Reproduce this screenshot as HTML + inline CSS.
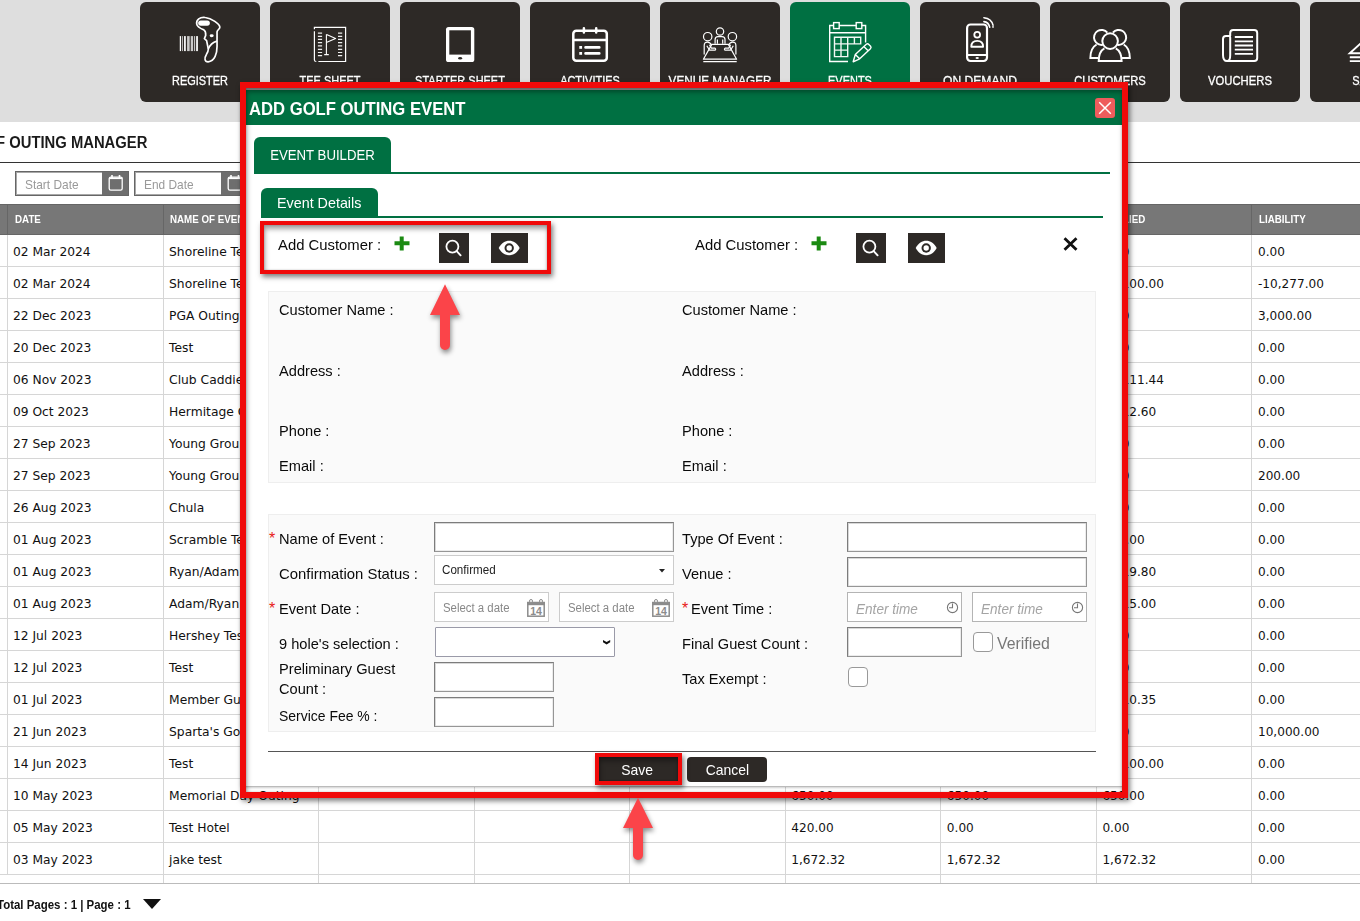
<!DOCTYPE html>
<html lang="en"><head><meta charset="utf-8"><title>Golf Outing Manager</title>
<style>
*{box-sizing:border-box;margin:0;padding:0}
html,body{width:1360px;height:921px;overflow:hidden;background:#fff}
body{position:relative;font-family:"Liberation Sans",sans-serif;color:#111;font-size:15px}
.abs{position:absolute}
/* nav */
.navband{position:absolute;left:0;top:0;width:1360px;height:122px;background:#dedede}
.tile{position:absolute;top:2px;width:120px;height:100px;background:#2d2926;border-radius:6px;color:#fff}
.tile.on{background:#007042}
.tile svg{position:absolute;left:0;top:0;width:120px;height:100px;overflow:visible}
.tile .lb{-webkit-text-stroke:.3px #fff;position:absolute;left:-20px;width:160px;top:71px;height:16px;line-height:16px;text-align:center;font-size:12.4px;white-space:nowrap;transform:scaleX(.885);transform-origin:50% 50%}
/* page */
.ptitle{position:absolute;left:-36px;top:133px;font-weight:bold;font-size:16px;line-height:20px;white-space:nowrap;color:#1a1a1a;transform:scaleX(.925);transform-origin:0 50%}
.phr{position:absolute;left:0;top:162px;width:1360px;height:1px;background:#333}
.dbox{position:absolute;top:171px;width:114px;height:25px;border:1px solid #666;box-shadow:inset 0 0 0 1px #a8a8a8;background:#fff}
.dbox .ph{position:absolute;left:9px;top:1px;line-height:24px;font-size:12.8px;color:#999;white-space:nowrap;transform:scaleX(.93);transform-origin:0 50%}
.dbox .cal{position:absolute;right:0;top:0;width:26px;height:23px;background:#6e6e6e}
/* grid */
.grid{position:absolute;left:-148px;top:204px;width:1560px;height:680px;overflow:hidden;border-bottom:1px solid #bbb;font-family:"DejaVu Sans","Liberation Sans",sans-serif}
.ghead{position:relative;height:31px;background:#777;border-top:1px solid #666;border-bottom:1px solid #666}
.grow{position:relative;height:32px;border-bottom:1px solid #d6d6d6;background:#fff}
.grow.last{height:10px;border-bottom:none}
.gc{position:absolute;top:0;bottom:0;border-right:1px solid #d6d6d6;font-size:12.3px;line-height:35px;white-space:nowrap;overflow:hidden;color:#111;padding-left:5.500px}
.grow .c0{padding-left:5px}
.c2,.c3,.c4,.c5,.c6,.c7,.c8{font-size:12.1px}
.c0{font-size:12.25px}
.ghead .c1 span{transform:scaleX(.975)}
.ghead .gc{border-right:1px solid #666;color:#fff;font-weight:bold;font-size:10.5px;line-height:29px;font-family:"Liberation Sans",sans-serif;padding-left:6.5px}
.ghead .gc span{display:inline-block;transform:scaleX(.93);transform-origin:0 50%}
.pager{position:absolute;left:-3px;top:897px;font-weight:bold;font-size:12px;line-height:16px;white-space:nowrap;color:#111}
.pager span{display:inline-block;transform:scaleX(.955);transform-origin:0 50%}
.pager i{position:absolute;left:146px;top:2px;width:0;height:0;border-left:9px solid transparent;border-right:9px solid transparent;border-top:10px solid #111}
.c0{left:156.00px;width:155.56px}
.c1{left:311.56px;width:155.56px}
.c2{left:467.12px;width:155.56px}
.c3{left:622.68px;width:155.56px}
.c4{left:778.24px;width:155.56px}
.c5{left:933.80px;width:155.56px}
.c6{left:1089.36px;width:155.56px}
.c7{left:1244.92px;width:155.56px}
.c8{left:1400.48px;width:155.56px}
.gpre{left:0;width:156px}
/* modal */
.modal{position:absolute;left:241px;top:88px;width:883px;height:699px;background:#fff;border-top:2px solid #aaa;border-bottom:1px solid #bbb;box-shadow:0 0 3px rgba(0,0,0,.35)}
.mhead{position:absolute;left:0;top:0;width:100%;height:35px;background:#007042}
.mhead .tt{position:absolute;left:8px;top:7px;line-height:24px;font-size:18.5px;font-weight:bold;color:#fff;white-space:nowrap;transform:scaleX(.9);transform-origin:0 50%}
.mclose{position:absolute;left:1095px;top:98px;width:20px;height:20px;border-radius:3px;background:#ee5c5c}
.tab{position:absolute;background:#007042;color:#fff;border-radius:6px 6px 0 0;white-space:nowrap;text-align:center}
.tab span{display:inline-block;transform-origin:50% 50%}
.gline{position:absolute;height:2px;background:#007042}
.lbl{position:absolute;white-space:nowrap;font-size:15px;line-height:20px;color:#0a0a0a;transform-origin:0 50%;transform:scaleX(.975)}
.req{position:absolute;color:#e81818;font-size:16px;line-height:20px;margin-top:-.5px}
.panel{position:absolute;background:#fafafa;border:1px solid #eee}
.sqb{position:absolute;background:#2d2926;height:30px;top:233px}
.inp{position:absolute;background:#fff;border:1px solid;border-color:#7c7c7c #969696 #969696 #7c7c7c;box-shadow:inset 1px 1px 0 #d8d8d8, inset -1px -1px 0 #ececec;height:30px}
.kdd{position:absolute;background:#fff;border:1px solid #ccc;height:30px}
.kdd .tx{position:absolute;left:7px;top:0;line-height:29px;font-size:12.5px;color:#222;white-space:nowrap;transform:scaleX(.93);transform-origin:0 50%}
.kdd .ph{position:absolute;left:8px;top:0;line-height:30px;font-size:12px;color:#888;white-space:nowrap;transform:scaleX(.95);transform-origin:0 50%}
.kdd.tm{border-color:#b4b4b4}
.kdd .phi{position:absolute;left:7.500px;top:.700px;line-height:30px;font-size:14px;font-style:italic;color:#a4a4a4;white-space:nowrap;transform:scaleX(.97);transform-origin:0 50%}
.sel{position:absolute;background:#fff;border:1px solid #9a9aa8;border-radius:1px;height:29.400px}
.cb{position:absolute;width:20px;height:20px;border:1px solid #999;border-radius:4px;background:#fff}
.btn{position:absolute;background:#2d2926;color:#fff;text-align:center;font-size:15px;white-space:nowrap}
.btn span{display:inline-block;transform:scaleX(.93)}
.redbox{position:absolute;border:solid #f00a0a;box-shadow:2px 3px 5px rgba(0,0,0,.5), inset 0 0 2px rgba(0,0,0,.25), inset 1px 4px 5px rgba(0,0,0,.36)}
</style></head>
<body>

<div class="navband"></div>
<div class="tile" style="left:140px"><svg viewBox="0 0 120 100"><rect x="39.77" y="34.1" width="1.30" height="15" fill="#fff" opacity="1"/><rect x="42.05" y="34.1" width="0.78" height="15" fill="#fff" opacity="0.8"/><rect x="44.01" y="34.1" width="1.82" height="15" fill="#fff" opacity="0.95"/><rect x="47.07" y="34.1" width="2.61" height="15" fill="#fff" opacity="0.75"/><rect x="50.72" y="34.1" width="2.35" height="15" fill="#fff" opacity="0.75"/><rect x="53.97" y="34.1" width="1.17" height="15" fill="#fff" opacity="0.7"/><rect x="56.06" y="34.1" width="1.95" height="15" fill="#fff" opacity="0.9"/><path d="M56.71 22.01 C56.06 17.77 59.97 14.84 65.18 15.49 C71.69 16.14 79.51 22.01 79.84 25.07 C80.03 26.89 77.23 27.87 77.04 29.82 L77.04 44.48 C77.04 51.0 74.95 59.47 68.11 59.79 C64.53 59.79 64.2 56.21 66.16 52.95 C67.46 50.67 68.44 49.04 68.31 47.09 L66.61 38.62 L64.4 36.66 L65.7 33.41 C65.83 30.8 65.5 28.85 63.88 27.87 C60.62 26.57 57.04 24.94 56.71 22.01Z" stroke="#fff" fill="none" stroke-width="1.700" stroke-linejoin="round"/><path d="M68.31 47.09 C69.74 43.18 73.0 40.25 77.04 39.14" stroke="#fff" fill="none" stroke-width="1.600"/><rect x="58.14" y="18.42" width="11.73" height="5.21" rx="2.6" fill="#fff"/><ellipse cx="71.69" cy="33.73" rx="2" ry="1.400" fill="#fff"/></svg><div class="lb">REGISTER</div></div>
<div class="tile" style="left:270px"><svg viewBox="0 0 120 100"><path d="M44.400 27.300V25.300H75.600V59.500H48.400M44.400 29.300V58Q44.400 59.500 46.300 59.500" stroke="#fff" fill="none" stroke-width="1.200"/><path d="M47.9 31.1h4.2M68 31.1h4.2 M47.9 34.4h4.2M68 34.4h4.2 M47.9 37.4h4.2M68 37.4h4.2 M47.9 40.6h4.2M68 40.6h4.2 M47.9 43.8h4.2M68 43.8h4.2 M47.9 47.3h4.2M68 47.3h4.2 M47.9 50.5h4.2M68 50.5h4.2 M47.9 53.6h4.2M68 53.6h4.2" stroke="#fff" fill="none" stroke-width="1.200" opacity=".92"/><path d="M56.4 32.2V52.5M54.200 52.600h4.600M56.600 32.600L65.600 36.600L56.900 40.200" stroke="#fff" fill="none" stroke-width="1.1" stroke-linejoin="round"/></svg><div class="lb">TEE SHEET</div></div>
<div class="tile" style="left:400px"><svg viewBox="0 0 120 100"><rect x="46" y="24.9" width="28.3" height="35.2" rx="2.6" fill="#fff"/><rect x="49.3" y="28.3" width="21.600" height="24.300" fill="#2d2926"/><ellipse cx="60.1" cy="56.3" rx="2" ry="1.300" fill="#2d2926"/></svg><div class="lb">STARTER SHEET</div></div>
<div class="tile" style="left:530px"><svg viewBox="0 0 120 100"><rect x="43.3" y="28.8" width="33.5" height="30" rx="3" stroke="#fff" fill="none" stroke-width="2.5"/><path d="M43.300 37.900H76.800" stroke="#fff" fill="none" stroke-width="2.500"/><path d="M53.900 26.300V30.600M66.200 26.300V30.600" stroke="#fff" fill="none" stroke-width="2.500" stroke-linecap="round"/><path d="M55.600 45.400H69.200M55.600 51.400H69.200" stroke="#fff" fill="none" stroke-width="2.800" stroke-linecap="round"/><rect x="49.300" y="44" width="2.800" height="2.800" fill="#fff"/><rect x="49.300" y="50" width="2.800" height="2.800" fill="#fff"/></svg><div class="lb">ACTIVITIES</div></div>
<div class="tile" style="left:660px"><svg viewBox="0 0 120 100"><circle cx="60" cy="29.5" r="3.700" stroke="#fff" fill="none" stroke-width="1.200"/><circle cx="47.700" cy="34.700" r="4.200" stroke="#fff" fill="none" stroke-width="1.200"/><circle cx="72.400" cy="34.700" r="4.200" stroke="#fff" fill="none" stroke-width="1.200"/><path d="M55.100 41.700V37.500Q55.100 34.600 58 34.600H62Q65 34.600 65 37.500V41.700M57.400 41.700V37.500M62.700 41.700V37.500" stroke="#fff" fill="none" stroke-width="1.200"/><path d="M51.800 42.400H68.400L76.600 57.200H43.400ZM43.300 59.700H76.700" stroke="#fff" fill="none" stroke-width="1.200" stroke-linejoin="round"/><path d="M44.200 52.500V43.500Q44.200 40 47.500 40.100Q50.300 40.200 51.500 43.200M46.800 43.800L49.600 48.200H55Q56.300 47.200 55 46.100H51.300L49.500 42.800" stroke="#fff" fill="none" stroke-width="1.200" stroke-linejoin="round"/><path d="M75.900 52.500V43.500Q75.900 40 72.600 40.100Q69.800 40.200 68.600 43.200M73.300 43.800L70.500 48.200H65.100Q63.800 47.200 65.100 46.100H68.800L70.600 42.800" stroke="#fff" fill="none" stroke-width="1.200" stroke-linejoin="round"/></svg><div class="lb" style="transform:scaleX(0.945)">VENUE MANAGER</div></div>
<div class="tile on" style="left:790px"><svg viewBox="0 0 120 100"><path d="M58 59.500H39.700V23.500H75.600V40.600M39.700 30.700H75.600" stroke="#fff" fill="none" stroke-width="1.400"/><rect x="43.600" y="20.600" width="5.600" height="6" fill="#007042" stroke="#fff" stroke-width="1.400"/><rect x="66.200" y="20.600" width="5.600" height="6" fill="#007042" stroke="#fff" stroke-width="1.400"/><path d="M44.500 35.200H70.700V41.900H44.500ZM44.500 41.900V54.600H57.700V35.200M51 35.200V54.600M64.400 35.200V41.900M44.500 48.100H57.700" stroke="#fff" fill="none" stroke-width="1.400" opacity=".95"/><path d="M63.200 59.800L65.300 52.500L76.300 42.300Q77.600 41.200 78.800 42.400L80.600 44.200Q81.600 45.500 80.400 46.700L69.700 56.800ZM65.300 52.500L69.700 56.800M73.800 44.600L78.200 48.800" stroke="#fff" fill="none" stroke-width="1.400" stroke-linejoin="round"/></svg><div class="lb">EVENTS</div></div>
<div class="tile" style="left:920px"><svg viewBox="0 0 120 100"><rect x="47.100" y="22.500" width="19.900" height="36.500" rx="3.400" stroke="#fff" fill="none" stroke-width="2.200"/><path d="M47.100 53H67" stroke="#fff" fill="none" stroke-width="2"/><ellipse cx="57.200" cy="56.100" rx="1.700" ry="1" fill="#fff"/><circle cx="57.200" cy="32.800" r="2.900" stroke="#fff" fill="none" stroke-width="1.800"/><path d="M51.300 44.700Q51.300 38.900 57.200 38.900Q63.100 38.900 63.100 44.700Z" stroke="#fff" fill="none" stroke-width="1.900" stroke-linejoin="round"/><path d="M63.900 15.700Q71.500 16.500 73 23.200M63.900 19.600Q68.600 20.100 69.700 25.200" stroke="#fff" fill="none" stroke-width="1.600" stroke-linecap="round"/><circle cx="73" cy="24.900" r=".9" fill="#fff"/></svg><div class="lb" style="transform:scaleX(0.975)">ON DEMAND</div></div>
<div class="tile" style="left:1050px"><svg viewBox="0 0 120 100"><path d="M53.600 42.600A7.500 7.500 0 1 1 57.300 30.600M62.900 30.600A7.500 7.500 0 1 1 66.600 42.600" stroke="#fff" fill="none" stroke-width="2"/><circle cx="60.100" cy="39.100" r="7.800" stroke="#fff" fill="none" stroke-width="2"/><path d="M54.400 46.300Q48.700 49.500 48.700 59.100H71.600Q71.600 49.500 65.800 46.300" stroke="#fff" fill="none" stroke-width="2" stroke-linejoin="miter"/><path d="M46.600 42.500Q40.400 46 40.400 55.900H48.300M73.700 42.500Q79.800 46 79.800 55.900H72" stroke="#fff" fill="none" stroke-width="2"/></svg><div class="lb" style="transform:scaleX(0.906)">CUSTOMERS</div></div>
<div class="tile" style="left:1180px"><svg viewBox="0 0 120 100"><path d="M50.200 33.900V31Q50.200 27.900 53.200 27.900H74.200Q77.200 27.900 77.200 31V56.100Q77.200 59.100 74.200 59.100H47Q43 59.100 43 53V37Q43 34 46 34H49.200Q50.200 34 50.200 36V53Q50.200 58.800 47.500 58.900" stroke="#fff" fill="none" stroke-width="2" stroke-linejoin="round"/><path d="M54.800 35H73M54.800 39.300H73M54.800 43.500H73M54.800 47.600H73M54.800 51.800H73" stroke="#fff" fill="none" stroke-width="1.800"/></svg><div class="lb" style="transform:scaleX(0.909)">VOUCHERS</div></div>
<div class="tile" style="left:1310px"><svg viewBox="0 0 120 100"><path d="M39.800 51.200L50 42L60.200 51.200ZM39.800 55.200H60M39.800 59.100H60" stroke="#fff" fill="none" stroke-width="1.900"/></svg><div class="lb">SALES</div></div>

<div class="grid">
<div class="ghead"><div class="gc gpre"></div>
<div class="gc c0"><span>DATE</span></div>
<div class="gc c1"><span>NAME OF EVENT</span></div>
<div class="gc c2"><span>TYPE OF EVENT</span></div>
<div class="gc c3"><span>STATUS</span></div>
<div class="gc c4"><span>GUEST COUNT</span></div>
<div class="gc c5"><span>TOTAL</span></div>
<div class="gc c6"><span>PAID</span></div>
<div class="gc c7"><span>APPLIED</span></div>
<div class="gc c8"><span>LIABILITY</span></div>
</div>
<div class="grow"><div class="gc gpre"></div>
<div class="gc c0"><span>02 Mar 2024</span></div>
<div class="gc c1"><span>Shoreline Test</span></div>
<div class="gc c2"><span></span></div>
<div class="gc c3"><span></span></div>
<div class="gc c4"><span></span></div>
<div class="gc c5"><span></span></div>
<div class="gc c6"><span></span></div>
<div class="gc c7"><span>0.00</span></div>
<div class="gc c8"><span>0.00</span></div>
</div>
<div class="grow"><div class="gc gpre"></div>
<div class="gc c0"><span>02 Mar 2024</span></div>
<div class="gc c1"><span>Shoreline Test</span></div>
<div class="gc c2"><span></span></div>
<div class="gc c3"><span></span></div>
<div class="gc c4"><span></span></div>
<div class="gc c5"><span></span></div>
<div class="gc c6"><span></span></div>
<div class="gc c7"><span>10,100.00</span></div>
<div class="gc c8"><span>-10,277.00</span></div>
</div>
<div class="grow"><div class="gc gpre"></div>
<div class="gc c0"><span>22 Dec 2023</span></div>
<div class="gc c1"><span>PGA Outing</span></div>
<div class="gc c2"><span></span></div>
<div class="gc c3"><span></span></div>
<div class="gc c4"><span></span></div>
<div class="gc c5"><span></span></div>
<div class="gc c6"><span></span></div>
<div class="gc c7"><span>0.00</span></div>
<div class="gc c8"><span>3,000.00</span></div>
</div>
<div class="grow"><div class="gc gpre"></div>
<div class="gc c0"><span>20 Dec 2023</span></div>
<div class="gc c1"><span>Test</span></div>
<div class="gc c2"><span></span></div>
<div class="gc c3"><span></span></div>
<div class="gc c4"><span></span></div>
<div class="gc c5"><span></span></div>
<div class="gc c6"><span></span></div>
<div class="gc c7"><span>0.00</span></div>
<div class="gc c8"><span>0.00</span></div>
</div>
<div class="grow"><div class="gc gpre"></div>
<div class="gc c0"><span>06 Nov 2023</span></div>
<div class="gc c1"><span>Club Caddie</span></div>
<div class="gc c2"><span></span></div>
<div class="gc c3"><span></span></div>
<div class="gc c4"><span></span></div>
<div class="gc c5"><span></span></div>
<div class="gc c6"><span></span></div>
<div class="gc c7"><span>12,111.44</span></div>
<div class="gc c8"><span>0.00</span></div>
</div>
<div class="grow"><div class="gc gpre"></div>
<div class="gc c0"><span>09 Oct 2023</span></div>
<div class="gc c1"><span>Hermitage Golf</span></div>
<div class="gc c2"><span></span></div>
<div class="gc c3"><span></span></div>
<div class="gc c4"><span></span></div>
<div class="gc c5"><span></span></div>
<div class="gc c6"><span></span></div>
<div class="gc c7"><span>3,412.60</span></div>
<div class="gc c8"><span>0.00</span></div>
</div>
<div class="grow"><div class="gc gpre"></div>
<div class="gc c0"><span>27 Sep 2023</span></div>
<div class="gc c1"><span>Young Group</span></div>
<div class="gc c2"><span></span></div>
<div class="gc c3"><span></span></div>
<div class="gc c4"><span></span></div>
<div class="gc c5"><span></span></div>
<div class="gc c6"><span></span></div>
<div class="gc c7"><span>0.00</span></div>
<div class="gc c8"><span>0.00</span></div>
</div>
<div class="grow"><div class="gc gpre"></div>
<div class="gc c0"><span>27 Sep 2023</span></div>
<div class="gc c1"><span>Young Group</span></div>
<div class="gc c2"><span></span></div>
<div class="gc c3"><span></span></div>
<div class="gc c4"><span></span></div>
<div class="gc c5"><span></span></div>
<div class="gc c6"><span></span></div>
<div class="gc c7"><span>0.00</span></div>
<div class="gc c8"><span>200.00</span></div>
</div>
<div class="grow"><div class="gc gpre"></div>
<div class="gc c0"><span>26 Aug 2023</span></div>
<div class="gc c1"><span>Chula</span></div>
<div class="gc c2"><span></span></div>
<div class="gc c3"><span></span></div>
<div class="gc c4"><span></span></div>
<div class="gc c5"><span></span></div>
<div class="gc c6"><span></span></div>
<div class="gc c7"><span>0.00</span></div>
<div class="gc c8"><span>0.00</span></div>
</div>
<div class="grow"><div class="gc gpre"></div>
<div class="gc c0"><span>01 Aug 2023</span></div>
<div class="gc c1"><span>Scramble Test</span></div>
<div class="gc c2"><span></span></div>
<div class="gc c3"><span></span></div>
<div class="gc c4"><span></span></div>
<div class="gc c5"><span></span></div>
<div class="gc c6"><span></span></div>
<div class="gc c7"><span>500.00</span></div>
<div class="gc c8"><span>0.00</span></div>
</div>
<div class="grow"><div class="gc gpre"></div>
<div class="gc c0"><span>01 Aug 2023</span></div>
<div class="gc c1"><span>Ryan/Adam</span></div>
<div class="gc c2"><span></span></div>
<div class="gc c3"><span></span></div>
<div class="gc c4"><span></span></div>
<div class="gc c5"><span></span></div>
<div class="gc c6"><span></span></div>
<div class="gc c7"><span>1,219.80</span></div>
<div class="gc c8"><span>0.00</span></div>
</div>
<div class="grow"><div class="gc gpre"></div>
<div class="gc c0"><span>01 Aug 2023</span></div>
<div class="gc c1"><span>Adam/Ryan</span></div>
<div class="gc c2"><span></span></div>
<div class="gc c3"><span></span></div>
<div class="gc c4"><span></span></div>
<div class="gc c5"><span></span></div>
<div class="gc c6"><span></span></div>
<div class="gc c7"><span>2,415.00</span></div>
<div class="gc c8"><span>0.00</span></div>
</div>
<div class="grow"><div class="gc gpre"></div>
<div class="gc c0"><span>12 Jul 2023</span></div>
<div class="gc c1"><span>Hershey Test</span></div>
<div class="gc c2"><span></span></div>
<div class="gc c3"><span></span></div>
<div class="gc c4"><span></span></div>
<div class="gc c5"><span></span></div>
<div class="gc c6"><span></span></div>
<div class="gc c7"><span>0.00</span></div>
<div class="gc c8"><span>0.00</span></div>
</div>
<div class="grow"><div class="gc gpre"></div>
<div class="gc c0"><span>12 Jul 2023</span></div>
<div class="gc c1"><span>Test</span></div>
<div class="gc c2"><span></span></div>
<div class="gc c3"><span></span></div>
<div class="gc c4"><span></span></div>
<div class="gc c5"><span></span></div>
<div class="gc c6"><span></span></div>
<div class="gc c7"><span>0.00</span></div>
<div class="gc c8"><span>0.00</span></div>
</div>
<div class="grow"><div class="gc gpre"></div>
<div class="gc c0"><span>01 Jul 2023</span></div>
<div class="gc c1"><span>Member Guest</span></div>
<div class="gc c2"><span></span></div>
<div class="gc c3"><span></span></div>
<div class="gc c4"><span></span></div>
<div class="gc c5"><span></span></div>
<div class="gc c6"><span></span></div>
<div class="gc c7"><span>1,210.35</span></div>
<div class="gc c8"><span>0.00</span></div>
</div>
<div class="grow"><div class="gc gpre"></div>
<div class="gc c0"><span>21 Jun 2023</span></div>
<div class="gc c1"><span>Sparta&#x27;s Golf</span></div>
<div class="gc c2"><span></span></div>
<div class="gc c3"><span></span></div>
<div class="gc c4"><span></span></div>
<div class="gc c5"><span></span></div>
<div class="gc c6"><span></span></div>
<div class="gc c7"><span>0.00</span></div>
<div class="gc c8"><span>10,000.00</span></div>
</div>
<div class="grow"><div class="gc gpre"></div>
<div class="gc c0"><span>14 Jun 2023</span></div>
<div class="gc c1"><span>Test</span></div>
<div class="gc c2"><span></span></div>
<div class="gc c3"><span></span></div>
<div class="gc c4"><span></span></div>
<div class="gc c5"><span></span></div>
<div class="gc c6"><span></span></div>
<div class="gc c7"><span>10,100.00</span></div>
<div class="gc c8"><span>0.00</span></div>
</div>
<div class="grow"><div class="gc gpre"></div>
<div class="gc c0"><span>10 May 2023</span></div>
<div class="gc c1"><span>Memorial Day Outing</span></div>
<div class="gc c2"><span></span></div>
<div class="gc c3"><span></span></div>
<div class="gc c4"><span></span></div>
<div class="gc c5"><span>650.00</span></div>
<div class="gc c6"><span>650.00</span></div>
<div class="gc c7"><span>650.00</span></div>
<div class="gc c8"><span>0.00</span></div>
</div>
<div class="grow"><div class="gc gpre"></div>
<div class="gc c0"><span>05 May 2023</span></div>
<div class="gc c1"><span>Test Hotel</span></div>
<div class="gc c2"><span></span></div>
<div class="gc c3"><span></span></div>
<div class="gc c4"><span></span></div>
<div class="gc c5"><span>420.00</span></div>
<div class="gc c6"><span>0.00</span></div>
<div class="gc c7"><span>0.00</span></div>
<div class="gc c8"><span>0.00</span></div>
</div>
<div class="grow"><div class="gc gpre"></div>
<div class="gc c0"><span>03 May 2023</span></div>
<div class="gc c1"><span>jake test</span></div>
<div class="gc c2"><span></span></div>
<div class="gc c3"><span></span></div>
<div class="gc c4"><span></span></div>
<div class="gc c5"><span>1,672.32</span></div>
<div class="gc c6"><span>1,672.32</span></div>
<div class="gc c7"><span>1,672.32</span></div>
<div class="gc c8"><span>0.00</span></div>
</div>
<div class="grow last"><div class="gc c0"></div><div class="gc c1"></div><div class="gc c2"></div><div class="gc c3"></div><div class="gc c4"></div><div class="gc c5"></div><div class="gc c6"></div><div class="gc c7"></div><div class="gc c8"></div></div>
</div>
<div class="ptitle">GOLF OUTING MANAGER</div>
<div class="phr"></div>
<div class="dbox" style="left:15px"><span class="ph">Start Date</span><span class="cal"><svg width="26" height="23" viewBox="0 0 26 23"><rect x="7.200" y="5.200" width="13" height="13" rx="1.600" fill="none" stroke="#fff" stroke-width="1.300"/><path d="M7 6.300h13.400" stroke="#fff" stroke-width="1.600"/><path d="M10 3v3.400M17.500 3v3.400" stroke="#fff" stroke-width="1.600"/></svg></span></div>
<div class="dbox" style="left:134px"><span class="ph">End Date</span><span class="cal"><svg width="26" height="23" viewBox="0 0 26 23"><rect x="7.200" y="5.200" width="13" height="13" rx="1.600" fill="none" stroke="#fff" stroke-width="1.300"/><path d="M7 6.300h13.400" stroke="#fff" stroke-width="1.600"/><path d="M10 3v3.400M17.500 3v3.400" stroke="#fff" stroke-width="1.600"/></svg></span></div>
<div class="pager"><span>Total Pages : 1 | Page : 1</span><i></i></div>

<div class="modal"><div class="mhead"><div class="tt">ADD GOLF OUTING EVENT</div></div></div>
<div class="mclose"><svg width="20" height="20" viewBox="0 0 20 20"><path d="M4.2 4.2l11.6 11.6M15.8 4.2L4.2 15.8" stroke="#fff" stroke-width="1.5" fill="none"/></svg></div>
<div class="tab" style="left:254px;top:137px;width:137px;height:36px;line-height:37px;font-size:14.5px"><span style="transform:scaleX(.91)">EVENT BUILDER</span></div>
<div class="gline" style="left:254px;top:172px;width:856px"></div>
<div class="tab" style="left:261px;top:188px;width:117px;height:29px;line-height:29px;font-size:15px"><span style="transform:scaleX(.955)">Event Details</span></div>
<div class="gline" style="left:261px;top:216px;width:842px"></div>

<!-- add customer rows -->
<div class="lbl" style="left:278px;top:235px;transform:scaleX(.99)">Add Customer :</div>
<svg class="abs" style="left:394px;top:236px" width="16" height="15" viewBox="0 0 16 15"><path d="M7.7 0.5v14M0.5 7.3h15" stroke="#1b8a12" stroke-width="4" fill="none"/></svg>
<div class="sqb" style="left:439px;width:30px"><svg width="30" height="30" viewBox="0 0 30 30"><circle cx="13.400" cy="13.600" r="6" fill="none" stroke="#fff" stroke-width="1.800"/><path d="M17.700 18.100l3.900 4.200" stroke="#fff" stroke-width="1.900" stroke-linecap="round"/></svg></div>
<div class="sqb" style="left:491px;width:37px"><svg width="37" height="30" viewBox="0 0 37 30"><path d="M7.700 15C10.500 10 14 7.800 18.200 7.800s7.700 2.200 10.500 7.200c-2.800 5-6.300 7.200-10.500 7.200S10.500 20 7.700 15z" fill="#fff"/><circle cx="18.200" cy="15" r="4.700" fill="#2d2926"/><circle cx="18.200" cy="15" r="2.700" fill="#fff"/></svg></div>

<div class="lbl" style="left:695px;top:235px;transform:scaleX(.99)">Add Customer :</div>
<svg class="abs" style="left:811px;top:236px" width="16" height="15" viewBox="0 0 16 15"><path d="M7.7 0.5v14M0.5 7.3h15" stroke="#1b8a12" stroke-width="4" fill="none"/></svg>
<div class="sqb" style="left:856px;width:30px"><svg width="30" height="30" viewBox="0 0 30 30"><circle cx="13.400" cy="13.600" r="6" fill="none" stroke="#fff" stroke-width="1.800"/><path d="M17.700 18.100l3.900 4.200" stroke="#fff" stroke-width="1.900" stroke-linecap="round"/></svg></div>
<div class="sqb" style="left:908px;width:37px"><svg width="37" height="30" viewBox="0 0 37 30"><path d="M7.700 15C10.500 10 14 7.800 18.200 7.800s7.700 2.200 10.500 7.200c-2.800 5-6.300 7.200-10.500 7.200S10.500 20 7.700 15z" fill="#fff"/><circle cx="18.200" cy="15" r="4.700" fill="#2d2926"/><circle cx="18.200" cy="15" r="2.700" fill="#fff"/></svg></div>
<svg class="abs" style="left:1063px;top:237px" width="15" height="14" viewBox="0 0 15 14"><path d="M1.5 1.2l12 11.6M13.500 1.2l-12 11.6" stroke="#111" stroke-width="2.8" fill="none"/></svg>

<!-- panel 1 -->
<div class="panel" style="left:268px;top:291px;width:828px;height:192px"></div>
<div class="lbl" style="left:279px;top:300px">Customer Name :</div>
<div class="lbl" style="left:279px;top:361px">Address :</div>
<div class="lbl" style="left:279px;top:421px">Phone :</div>
<div class="lbl" style="left:279px;top:456px">Email :</div>
<div class="lbl" style="left:682px;top:300px">Customer Name :</div>
<div class="lbl" style="left:682px;top:361px">Address :</div>
<div class="lbl" style="left:682px;top:421px">Phone :</div>
<div class="lbl" style="left:682px;top:456px">Email :</div>

<!-- panel 2 -->
<div class="panel" style="left:268px;top:514px;width:828px;height:218px"></div>
<div class="req" style="left:269px;top:529px">*</div>
<div class="lbl" style="left:279px;top:529px">Name of Event :</div>
<div class="inp" style="left:434px;top:522px;width:240px"></div>
<div class="lbl" style="left:279px;top:564px;transform:scaleX(.992)">Confirmation Status :</div>
<div class="kdd" style="left:434px;top:555px;width:240px"><span class="tx">Confirmed</span><svg class="abs" style="left:224px;top:12.500px" width="6" height="4" viewBox="0 0 6 4"><path d="M0 0h6L3 3.600z" fill="#222"/></svg></div>
<div class="req" style="left:269px;top:599px">*</div>
<div class="lbl" style="left:279px;top:599px">Event Date :</div>
<div class="kdd" style="left:434px;top:592px;width:115px"><span class="ph">Select a date</span><svg class="abs" style="left:91px;top:4.5px" width="20" height="20" viewBox="0 0 20 20"><rect x="1.800" y="4.600" width="16.400" height="13.600" fill="#fff" stroke="#8c8c8c" stroke-width="1.500"/><rect x="1.100" y="3.900" width="17.800" height="3.300" fill="#8c8c8c"/><circle cx="5" cy="3" r="1.500" fill="#fff" stroke="#8c8c8c" stroke-width="1"/><circle cx="15" cy="3" r="1.500" fill="#fff" stroke="#8c8c8c" stroke-width="1"/><text x="10" y="16.600" font-size="10.500" style="font-family:'Liberation Sans',sans-serif;font-weight:bold" fill="#8c8c8c" text-anchor="middle">14</text></svg></div>
<div class="kdd" style="left:559px;top:592px;width:115px"><span class="ph">Select a date</span><svg class="abs" style="left:91px;top:4.5px" width="20" height="20" viewBox="0 0 20 20"><rect x="1.800" y="4.600" width="16.400" height="13.600" fill="#fff" stroke="#8c8c8c" stroke-width="1.500"/><rect x="1.100" y="3.900" width="17.800" height="3.300" fill="#8c8c8c"/><circle cx="5" cy="3" r="1.500" fill="#fff" stroke="#8c8c8c" stroke-width="1"/><circle cx="15" cy="3" r="1.500" fill="#fff" stroke="#8c8c8c" stroke-width="1"/><text x="10" y="16.600" font-size="10.500" style="font-family:'Liberation Sans',sans-serif;font-weight:bold" fill="#8c8c8c" text-anchor="middle">14</text></svg></div>
<div class="lbl" style="left:279px;top:634px">9 hole's selection :</div>
<div class="sel" style="left:435px;top:627.400px;width:180px"><svg class="abs" style="left:167px;top:11.200px" width="8" height="6" viewBox="0 0 8 6"><path d="M0 0L3.600 2L7.200 0V2.200L3.600 4.600L0 2.200Z" fill="#111"/></svg></div>
<div class="lbl" style="left:279px;top:659px">Preliminary Guest</div>
<div class="lbl" style="left:279px;top:679px">Count :</div>
<div class="inp" style="left:434px;top:662px;width:120px"></div>
<div class="lbl" style="left:279px;top:706px;transform:scaleX(.93)">Service Fee % :</div>
<div class="inp" style="left:434px;top:697px;width:120px"></div>

<div class="lbl" style="left:682px;top:529px">Type Of Event :</div>
<div class="inp" style="left:847px;top:522px;width:240px"></div>
<div class="lbl" style="left:682px;top:564px">Venue :</div>
<div class="inp" style="left:847px;top:557px;width:240px"></div>
<div class="req" style="left:682px;top:599px">*</div>
<div class="lbl" style="left:691px;top:599px">Event Time :</div>
<div class="kdd tm" style="left:847px;top:592px;width:115px"><span class="phi">Enter time</span><svg class="abs" style="left:97.700px;top:8.100px" width="13" height="13" viewBox="0 0 13 13"><circle cx="6.500" cy="6.500" r="5.100" fill="none" stroke="#777" stroke-width="1.100"/><path d="M6.500 2.600V6.700H3" stroke="#777" stroke-width="1.100" fill="none"/></svg></div>
<div class="kdd tm" style="left:972px;top:592px;width:115px"><span class="phi">Enter time</span><svg class="abs" style="left:97.700px;top:8.100px" width="13" height="13" viewBox="0 0 13 13"><circle cx="6.500" cy="6.500" r="5.100" fill="none" stroke="#777" stroke-width="1.100"/><path d="M6.500 2.600V6.700H3" stroke="#777" stroke-width="1.100" fill="none"/></svg></div>
<div class="lbl" style="left:682px;top:634px">Final Guest Count :</div>
<div class="inp" style="left:847px;top:627px;width:115px"></div>
<div class="cb" style="left:973px;top:632px"></div>
<div class="lbl" style="left:997px;top:634px;color:#777;font-size:16px;transform:scaleX(.99)">Verified</div>
<div class="lbl" style="left:682px;top:669px">Tax Exempt :</div>
<div class="cb" style="left:848px;top:667px"></div>

<div class="abs" style="left:268px;top:751px;width:828px;height:1px;background:#555"></div>
<div class="btn" style="left:599px;top:757px;width:79px;padding-right:2px;height:24px;line-height:26px"><span>Save</span></div>
<div class="btn" style="left:687px;top:757px;width:80px;height:25px;line-height:26px;border-radius:4px"><span>Cancel</span></div>

<!-- annotation overlays -->
<div class="redbox" style="left:240px;top:82px;width:888px;height:716px;border-width:6px"></div>
<div class="redbox" style="left:260px;top:221px;width:291px;height:53px;border-width:4px"></div>
<div class="redbox" style="left:595px;top:753px;width:87px;height:32px;border-width:4px"></div>
<svg class="abs" style="left:420px;top:280px;filter:drop-shadow(1px 3px 2.500px rgba(0,0,0,.45))" width="50" height="80" viewBox="0 0 50 80"><path d="M25 4.300L40 35H30V65a5 5 0 0 1-10 0V35H10z" fill="#fb4449"/></svg>
<svg class="abs" style="left:613px;top:794px;filter:drop-shadow(1px 3px 2.500px rgba(0,0,0,.45))" width="50" height="80" viewBox="0 0 50 80"><path d="M25 3.800L40 34H30V61a5 5 0 0 1-10 0V34H10z" fill="#fb4449"/></svg>

</body></html>
